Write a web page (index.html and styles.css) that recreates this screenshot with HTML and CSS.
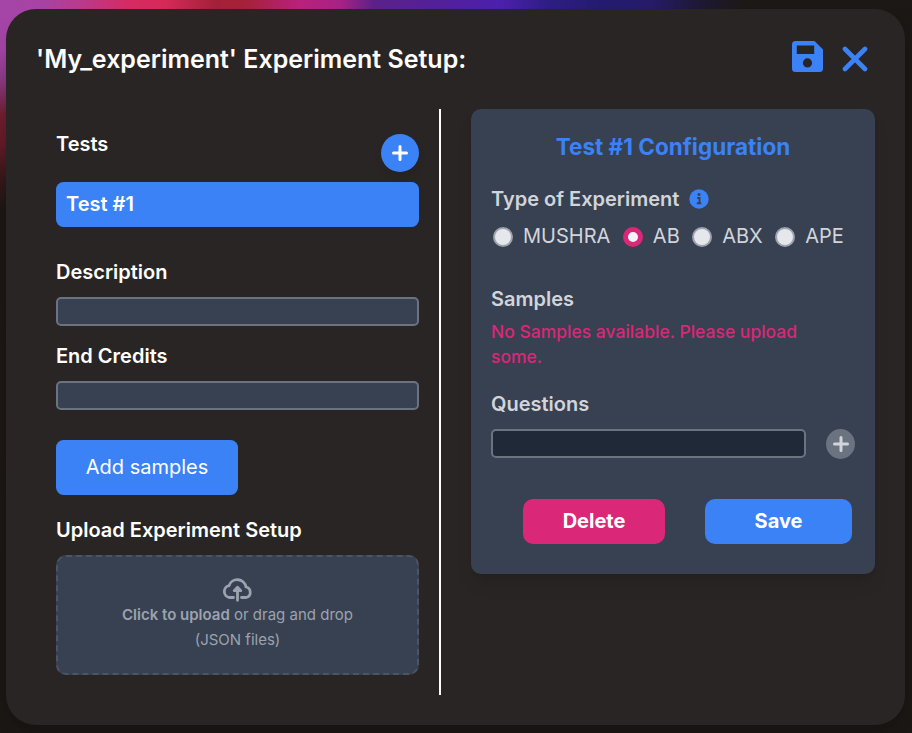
FILE: index.html
```html
<!DOCTYPE html>
<html lang="en">
<head>
<meta charset="utf-8">
<title>Experiment Setup</title>
<link rel="stylesheet" href="styles.css">
</head>
<body>
<main class="modal">
  <header class="modal-header">
    <h1>'My_experiment' Experiment Setup:</h1>
    <div class="header-actions">
      <svg class="icon-save" viewBox="0 0 31 31"><path fill="currentColor" fill-rule="evenodd" d="M3.5 0H22.5L31 8.500V27.500Q31 31 27.500 31H3.500Q0 31 0 27.500V3.500Q0 0 3.500 0ZM4.800 4.500V13H22.200V4.500ZM15.500 17.300a4.600 4.600 0 1 0 0 9.200a4.600 4.600 0 1 0 0-9.200Z"/></svg>
      <svg class="icon-close" viewBox="0 0 26 26"><path d="M3 3L23 23M23 3L3 23" fill="none" stroke="currentColor" stroke-width="4.600" stroke-linecap="round"/></svg>
    </div>
  </header>
  <div class="columns">
    <section class="setup">
      <div class="tests-head">
        <h2>Tests</h2>
        <button class="add-test" aria-label="Add test"><svg viewBox="0 0 16 16"><path d="M8 1.500V14.500M1.500 8H14.500" stroke="currentColor" stroke-width="3" stroke-linecap="round"/></svg></button>
      </div>
      <div class="test-item">Test #1</div>
      <h2 class="label-description">Description</h2>
      <input class="field" type="text" aria-label="Description">
      <h2 class="label-credits">End Credits</h2>
      <input class="field" type="text" aria-label="End Credits">
      <button class="add-samples">Add samples</button>
      <h2 class="label-upload">Upload Experiment Setup</h2>
      <div class="dropzone">
        <svg viewBox="0 0 31 24"><path d="M11.500 19.500H7.500A6 6 0 0 1 7 7.700A8.800 8.800 0 0 1 24 9A5.400 5.400 0 0 1 24.200 19.500H19.500" fill="none" stroke="currentColor" stroke-width="2.800" stroke-linecap="round" stroke-linejoin="round"/><path d="M15.500 22.300V10.500M12.200 12.700L15.500 9.300L18.800 12.700Z" fill="currentColor" stroke="currentColor" stroke-width="2.800" stroke-linecap="round" stroke-linejoin="round"/></svg>
        <p><b>Click to upload</b> or drag and drop</p>
        <p>(JSON files)</p>
      </div>
    </section>
    <section class="config">
      <h3>Test #1 Configuration</h3>
      <div class="type-head">
        <h2>Type of Experiment</h2>
        <svg viewBox="0 0 20 20"><circle cx="10" cy="10" r="9.700" fill="#3b82f6"/><circle cx="10" cy="5.600" r="1.500" fill="#374151"/><path d="M8.200 9H10.500V14M7.800 14.200H12.200" fill="none" stroke="#374151" stroke-width="1.900"/></svg>
      </div>
      <div class="radios">
        <label><i class="radio"></i>MUSHRA</label>
        <label><i class="radio checked"></i>AB</label>
        <label><i class="radio"></i>ABX</label>
        <label><i class="radio"></i>APE</label>
      </div>
      <h2>Samples</h2>
      <p class="warning">No Samples available. Please upload some.</p>
      <h2>Questions</h2>
      <div class="question-row">
        <input class="field dark" type="text" aria-label="Question">
        <button class="add-question" aria-label="Add question"><svg viewBox="0 0 16 16"><path d="M8 1.500V14.500M1.500 8H14.500" stroke="currentColor" stroke-width="3" stroke-linecap="round"/></svg></button>
      </div>
      <div class="actions">
        <button class="delete">Delete</button>
        <button class="save">Save</button>
      </div>
    </section>
  </div>
</main>
</body>
</html>
```
FILE: styles.css
```css
* { box-sizing: border-box; margin: 0; padding: 0; }

body {
  width: 912px;
  height: 733px;
  padding: 9px 7px 8px 6px;
  overflow: hidden;
  font: 20px/30px Inter, "Liberation Sans", sans-serif;
  color: #fff;
  background:
    linear-gradient(90deg, #a545a8 0, #a743a4 40px, #b83a8c 80px, #d62a62 130px, #d52a58 165px, #a32138 215px, #a52139 245px, #b9217c 300px, #a72285 340px, #5a2188 375px, #53209a 440px, #4c20ae 500px, #2d1d82 550px, #241b70 600px, #251b69 650px, #1e1834 700px, #1c1816 745px, #1c1815 100%) 0 0 / 100% 9px no-repeat,
    linear-gradient(180deg, #a545a8 0, #a144a4 50px, #873983 80px, #772a53 100px, #6d1d2b 115px, #5f1a25 145px, #331818 180px, #1c1614 210px, #1a1715 100%) 0 0 / 40px 100% no-repeat,
    #1a1714;
}

button { border: 0; font: inherit; color: #fff; }
button, input { display: block; }
svg { display: block; flex: none; }
h2 { font-size: 20px; font-weight: 600; line-height: 30px; }

.modal {
  height: 716px;
  padding: 30px;
  border-radius: 30px;
  background: #292524;
  box-shadow: 0 12px 19px -4px rgba(0, 0, 0, .1), 0 5px 8px -5px rgba(0, 0, 0, .1);
}

.modal-header { display: flex; justify-content: space-between; height: 70px; }
h1 { font-size: 25px; font-weight: 600; line-height: 40px; }
.header-actions { display: flex; gap: 19px; padding: 2px 7px 0 0; color: #3b82f6; }
.icon-save { width: 31px; height: 31px; }
.icon-close { width: 26px; height: 26px; margin-top: 5px; }

.columns { display: flex; gap: 30px; align-items: flex-start; }

.setup { width: 405px; height: 586px; padding: 20px 20px 0; border-right: 2px solid #fff; }
.tests-head { display: flex; justify-content: space-between; height: 53px; }
.add-test {
  display: flex; align-items: center; justify-content: center;
  width: 38px; height: 38px; margin-top: 5px;
  border-radius: 50%; background: #3b82f6;
  box-shadow: 0 5px 8px -1px rgba(0, 0, 0, .1);
}
.add-test svg { width: 16px; height: 16px; }
.test-item {
  height: 45px; padding: 7px 10px; margin-bottom: 30px;
  border-radius: 7.500px; background: #3b82f6; font-weight: 600;
}
.field {
  width: 100%; height: 29px; margin-top: 10px;
  border: 2px solid #6b7280; border-radius: 5px; background: #374151;
}
.label-credits { margin-top: 15px; }
.add-samples {
  width: 182px; height: 55px; margin: 30px 0 20px; padding-bottom: 2px;
  border-radius: 7.500px; background: #3b82f6; font-weight: 400;
}
.dropzone {
  display: flex; flex-direction: column; align-items: center;
  height: 120px; margin-top: 10px; padding-top: 21px;
  border: 2px dashed #4b5563; border-radius: 10px;
  background: #374151; color: #9ca3af;
  font-size: 15px; line-height: 25px;
}
.dropzone svg { width: 31px; height: 24px; }
.dropzone b { font-weight: 600; }

.config {
  width: 404px; height: 465px; padding: 20px;
  border-radius: 10px; background: #374151; color: #d1d5db;
  box-shadow: 0 12px 19px -4px rgba(0, 0, 0, .1), 0 5px 8px -5px rgba(0, 0, 0, .1);
}
h3 {
  margin-bottom: 20px; color: #3b82f6;
  font-size: 22.500px; font-weight: 700; line-height: 35px; text-align: center;
}
.type-head { display: flex; align-items: center; gap: 10px; }
.type-head svg { width: 20px; height: 20px; }
.radios { display: flex; gap: 12.500px; height: 65px; margin: 7px 0 5px; padding-left: 2px; }
.radios + h2 { margin-top: -7px; }
.radios label { display: flex; align-items: flex-start; gap: 10px; height: 30px; }
.radio {
  width: 20px; height: 20px; margin-top: 6px;
  border: 2px solid #9ca3af; border-radius: 50%; background: #e5e7eb;
}
.radio.checked { border: 5px solid #db2777; background: #f3f4f6; }
.warning {
  width: 344px; margin: 5px 0 20px; color: #db2777;
  font-size: 17.500px; font-weight: 500; line-height: 25px;
}
.question-row { display: flex; justify-content: space-between; margin-top: 10px; }
.dark { width: 315px; margin-top: 0; background: #1f2937; }
.add-question {
  display: flex; align-items: center; justify-content: center;
  width: 29px; height: 30px; border-radius: 50%;
  background: #6b7280; color: #d1d5db;
}
.add-question svg { width: 16px; height: 16px; }
.actions { display: flex; gap: 40px; margin: 40px 0 0 32px; }
.actions button { height: 45px; padding-bottom: 1px; border-radius: 10px; font-weight: 700; }
.delete { width: 142px; background: #db2777; }
.save { width: 147px; background: #3b82f6; }
```
